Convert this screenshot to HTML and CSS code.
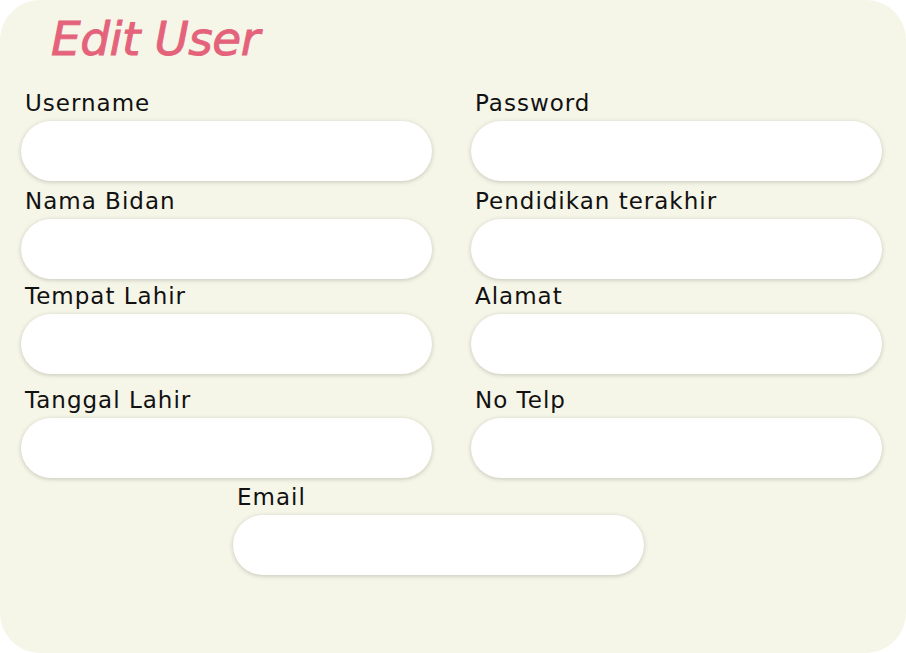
FILE: index.html
```html
<!DOCTYPE html>
<html lang="id">
<head>
<meta charset="utf-8">
<title>Edit User</title>
<link rel="stylesheet" href="styles.css">
</head>
<body>
<div class="card">
  <h1 class="title">Edit User</h1>
  <form class="form">
    <div class="grid">
      <div class="field f1"><label>Username</label><input type="text"></div>
      <div class="field f1"><label>Password</label><input type="password"></div>
      <div class="field f2"><label>Nama Bidan</label><input type="text"></div>
      <div class="field f2"><label>Pendidikan terakhir</label><input type="text"></div>
      <div class="field f3"><label>Tempat Lahir</label><input type="text"></div>
      <div class="field f3"><label>Alamat</label><input type="text"></div>
      <div class="field f4"><label>Tanggal Lahir</label><input type="text"></div>
      <div class="field f4"><label>No Telp</label><input type="text"></div>
    </div>
    <div class="field email"><label>Email</label><input type="email"></div>
  </form>
</div>
</body>
</html>
```

FILE: styles.css
```css
html, body {
  margin: 0;
  padding: 0;
  background: #ffffff;
}
body {
  font-family: "DejaVu Sans", "Open Sans", sans-serif;
  color: #111111;
}
.card {
  width: 906px;
  height: 653px;
  box-sizing: border-box;
  background: #f5f5e8;
  border-radius: 40px;
  padding: 0 24px 0 21px;
  overflow: hidden;
}
.title {
  margin: 0;
  padding: 9px 0 0 30px;
  height: 80px;
  box-sizing: border-box;
  font-size: 47px;
  line-height: 60px;
  letter-spacing: -0.5px;
  font-style: italic;
  font-weight: 400;
  color: #e4627a;
  -webkit-text-stroke: 0.9px #e4627a;
}
.grid {
  display: grid;
  grid-template-columns: 411px 411px;
  column-gap: 39px;
}
.field {
  display: flex;
  flex-direction: column;
}
.field label {
  font-size: 23px;
  line-height: 23px;
  height: 23px;
  letter-spacing: 1px;
  padding-left: 4px;
  margin-bottom: 6px;
}
.field input {
  width: 411px;
  height: 60px;
  box-sizing: border-box;
  border: none;
  outline: none;
  border-radius: 30px;
  background: #ffffff;
  box-shadow: 0 1px 4px rgba(80, 80, 60, 0.28);
  padding: 0 24px;
  font: inherit;
}
.f1 { margin-top: 12px; }
.f2 { margin-top: 9px; }
.f3 { margin-top: 6px; }
.f4 { margin-top: 15px; }
.email {
  margin: 8px 0 0 212px;
  width: 411px;
}
```
